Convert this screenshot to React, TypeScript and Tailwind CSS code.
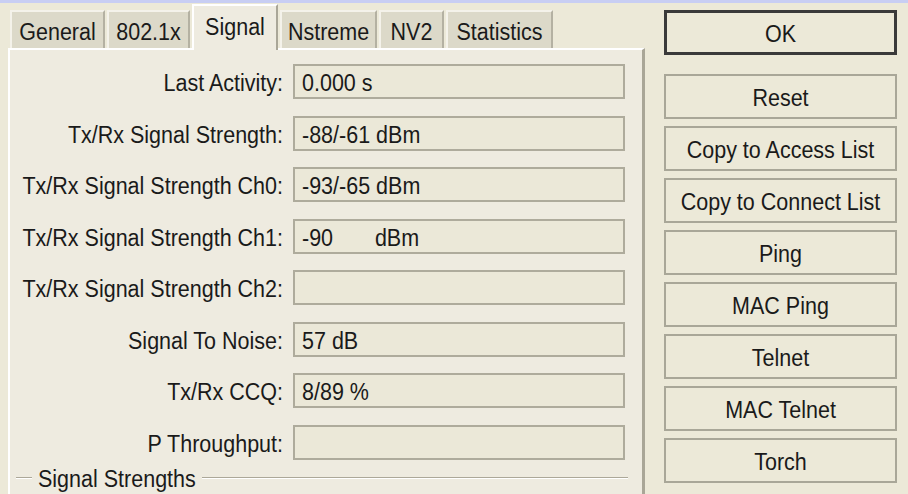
import React from "react";

const font = { fontFamily: '"Liberation Sans", Arial, sans-serif' };

const rows: { label: string; value: string }[] = [
  { label: "Last Activity:", value: "0.000 s" },
  { label: "Tx/Rx Signal Strength:", value: "-88/-61 dBm" },
  { label: "Tx/Rx Signal Strength Ch0:", value: "-93/-65 dBm" },
  { label: "Tx/Rx Signal Strength Ch1:", value: "-90\u00a0\u00a0\u00a0\u00a0\u00a0\u00a0\u00a0dBm" },
  { label: "Tx/Rx Signal Strength Ch2:", value: "" },
  { label: "Signal To Noise:", value: "57 dB" },
  { label: "Tx/Rx CCQ:", value: "8/89 %" },
  { label: "P Throughput:", value: "" },
];

const buttons = [
  "Reset",
  "Copy to Access List",
  "Copy to Connect List",
  "Ping",
  "MAC Ping",
  "Telnet",
  "MAC Telnet",
  "Torch",
];

function T({ children }: { children: React.ReactNode }) {
  return <span className="inline-block mt-[4px] scale-y-[1.12] whitespace-pre">{children}</span>;
}

function Tab({ label, w, active }: { label: string; w: string; active?: boolean }) {
  if (active) {
    return (
      <div
        className={`${w} h-[46px] -mb-[2px] relative z-10 bg-[#eeebe0] border-t-2 border-l-2 border-white border-r-2 border-r-[#a9a697] flex items-center justify-center pb-[6px] text-[21.5px] text-[#1a1a1a]`}
      >
        <T>{label}</T>
      </div>
    );
  }
  return (
    <div
      className={`${w} h-[38px] bg-[#dcd9c9] border-t-2 border-l-2 border-[#f4f2ea] border-r-2 border-r-[#b4b1a2] flex items-center justify-center text-[21.5px] text-[#1a1a1a]`}
    >
      <T>{label}</T>
    </div>
  );
}

export default function App() {
  return (
    <div
      className="w-[908px] h-[494px] overflow-hidden bg-[#ece9d8] border-t-[3px] border-[#c8cef3] flex"
      style={font}
    >
      {/* left: tabs + panel */}
      <div className="w-[645px] pt-[1px] pl-[8px] flex flex-col">
        <div className="flex items-end gap-[2px] pl-[2px] h-[44px]">
          <Tab label="General" w="w-[95px]" />
          <Tab label="802.1x" w="w-[83px]" />
          <Tab label="Signal" w="w-[86px]" active />
          <Tab label="Nstreme" w="w-[97px]" />
          <Tab label="NV2" w="w-[65px]" />
          <Tab label="Statistics" w="w-[107px]" />
        </div>
        <div className="flex-1 bg-[#eeebe0] border-t-2 border-l-2 border-white border-r-[3px] border-r-[#a9a697] pt-[14px] pr-[14px] flex flex-col">
          <div className="flex flex-col gap-[16.5px]">
            {rows.map((r) => (
              <div key={r.label} className="flex items-center h-[35px]">
                <div className="w-[273px] h-full flex items-center justify-end text-[21.5px] text-[#1a1a1a] whitespace-nowrap">
                  <T>{r.label}</T>
                </div>
                <div className="ml-[10px] w-[332px] h-[35px] border-2 border-[#aeab9c] bg-[#ebe8d8] flex items-center pl-[7px] text-[21.5px] text-[#1a1a1a]">
                  <T>{r.value}</T>
                </div>
              </div>
            ))}
          </div>
          <div className="flex items-center mt-[3px] h-[30px] pl-[6px]">
            <div className="w-[16px] h-[2px] border-t border-[#aca899] border-b border-b-white" />
            <span className="px-[6px] text-[21.5px] text-[#1a1a1a]">
              <T>Signal Strengths</T>
            </span>
            <div className="flex-1 h-[2px] border-t border-[#aca899] border-b border-b-white" />
          </div>
        </div>
      </div>

      {/* right: buttons */}
      <div className="ml-[19px] w-[233px] pt-[7px] flex flex-col">
        <div className="h-[45px] border-[3px] border-[#3a3a3a] bg-[#ece9d8] flex items-center justify-center text-[21.5px] text-[#1a1a1a]">
          <T>OK</T>
        </div>
        <div className="mt-[19px] flex flex-col gap-[7px]">
          {buttons.map((b) => (
            <div
              key={b}
              className="h-[45px] border-2 border-[#a9a798] bg-[#ece9d8] flex items-center justify-center text-[21.5px] text-[#1a1a1a] whitespace-nowrap"
            >
              <T>{b}</T>
            </div>
          ))}
        </div>
      </div>
      <div className="flex-1" />
    </div>
  );
}
